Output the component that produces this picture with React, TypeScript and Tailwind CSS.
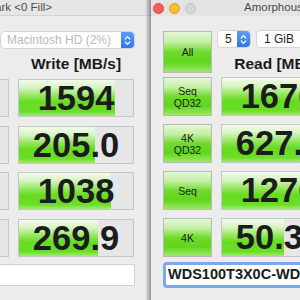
import React from "react";

const GREEN =
  "bg-[linear-gradient(to_bottom,#f3fbee_0%,#d6f4c0_22%,#8fe557_46%,#66dc1f_62%,#6bde28_88%,#a2eb72_100%)]";
const BTN_GREEN =
  "bg-[linear-gradient(to_bottom,#e4f7d6_0%,#c4efa4_25%,#6fdb2c_50%,#5fd61a_75%,#9de86a_100%)]";

function Stepper() {
  return (
    <div className="flex h-full w-[13px] shrink-0 items-center justify-center rounded-r-[4px] bg-[linear-gradient(to_bottom,#5e9cf8,#2f76ef)]">
      <svg width="7" height="11" viewBox="0 0 7 11" fill="none" stroke="white" strokeWidth="1.2" strokeLinecap="round" strokeLinejoin="round">
        <path d="M1.2 4 L3.5 1.6 L5.8 4" />
        <path d="M1.2 7 L3.5 9.4 L5.8 7" />
      </svg>
    </div>
  );
}

function Select({ label, className, muted, stepper }: { label: string; className: string; muted?: boolean; stepper?: boolean }) {
  return (
    <div className={`flex h-[16px] shrink-0 items-center rounded-[4px] bg-white shadow-[0_0_0_1px_#d4d4d4] ${className}`}>
      <div className={`flex-1 whitespace-nowrap text-[12px] leading-none ${muted ? "pl-[6px] text-[#b9b9b9]" : "pl-[7px] text-[#1f1f1f]"}`}>{label}</div>
      {stepper && <Stepper />}
    </div>
  );
}

function ValueBox({ value, pct }: { value: string; pct: number }) {
  return (
    <div className="relative h-full overflow-hidden border border-[#c6c6c6] bg-[#e6e6e6]">
      <div className={`absolute inset-y-0 left-0 ${GREEN}`} style={{ width: `${pct}%` }} />
      <div className="relative flex h-full items-center justify-center text-[34.5px] font-bold leading-none text-[#1c1c1c]">
        {value}
      </div>
    </div>
  );
}

function TestButton({ lines, active }: { lines: string[]; active: boolean }) {
  return (
    <div
      className={`flex h-full flex-col items-center justify-center border border-[#b9b9b9] text-[10.5px] leading-[12px] text-[#1a1a1a] ${
        active ? BTN_GREEN : "bg-[#e9e9e9]"
      }`}
    >
      {lines.map((l) => (
        <span key={l}>{l}</span>
      ))}
    </div>
  );
}

type Row = { lines: string[]; read: string; readPct: number; write: string; writePct: number };

const leftRows: Row[] = [
  { lines: ["Seq", "QD32"], read: "2780", readPct: 60, write: "1594", writePct: 84 },
  { lines: ["4K", "QD32"], read: "593.6", readPct: 58, write: "205.0", writePct: 67 },
  { lines: ["Seq"], read: "1272", readPct: 62, write: "1038", writePct: 81 },
  { lines: ["4K"], read: "48.19", readPct: 50, write: "269.9", writePct: 69 },
];

const rightRows: Row[] = [
  { lines: ["Seq", "QD32"], read: "1676", readPct: 88, write: "1593", writePct: 84 },
  { lines: ["4K", "QD32"], read: "627.4", readPct: 76, write: "204.8", writePct: 67 },
  { lines: ["Seq"], read: "1276", readPct: 85, write: "1041", writePct: 81 },
  { lines: ["4K"], read: "50.32", readPct: 54, write: "270.1", writePct: 69 },
];

export default function App() {
  const leftMt = ["mt-[8px]", "mt-[9px]", "mt-[8px]", "mt-[9px]"];
  const rightMt = ["mt-[7px]", "mt-[8px]", "mt-[8px]", "mt-[8px]"];
  return (
    <div className="flex h-[300px] w-[300px] overflow-hidden bg-[#ececec] font-['Liberation_Sans',Arial,sans-serif]">
      {/* Left (inactive) window */}
      <div className="-ml-[177px] h-full w-[328px] shrink-0 bg-[#ececec]">
        <div className="flex h-[16px] items-center justify-end whitespace-nowrap border-b border-[#d2d2d2] bg-[#e6e6e6] pr-[99px] text-[11.5px] text-[#4b4b4b]">
          AmorphousDiskMark &lt;0 Fill&gt;
        </div>
        <div className="pl-[12px] pr-[16px] pt-[16px]">
          <div className="grid h-[39px] grid-cols-[49px_116px_116px] gap-x-[9px]">
            <TestButton lines={["All"]} active={false} />
            <div className="col-span-2 flex flex-col">
              <div className="flex justify-end">
                <Select label="Macintosh HD (2%)" className="w-[133px]" muted stepper />
              </div>
              <div className="mt-[7px] grid grid-cols-2 gap-x-[9px] text-[15.5px] font-bold leading-[18px] text-[#1a1a1a]">
                <div className="text-center whitespace-nowrap">Read [MB/s]</div>
                <div className="text-center whitespace-nowrap">Write [MB/s]</div>
              </div>
            </div>
          </div>
          {leftRows.map((r, i) => (
            <div key={i} className={`grid h-[38px] grid-cols-[49px_116px_116px] gap-x-[9px] ${leftMt[i]}`}>
              <TestButton lines={r.lines} active={false} />
              <ValueBox value={r.read} pct={r.readPct} />
              <ValueBox value={r.write} pct={r.writePct} />
            </div>
          ))}
          <div className="mt-[7px] h-[22px] border border-[#cfcfcf] bg-white" />
        </div>
      </div>

      {/* Right (active) window */}
      <div className="relative h-full w-[500px] shrink-0 bg-[#ececec]">
        <div className="pointer-events-none absolute right-full top-0 h-full w-[6px] bg-[linear-gradient(to_left,rgba(0,0,0,0.38),rgba(0,0,0,0))]" />
        <div className="flex h-[16px] items-center whitespace-nowrap bg-[#e3e3e3] pl-[2px] text-[11.5px] text-[#4b4b4b]">
          <span className="h-[11px] w-[11px] rounded-full border border-[#e0443e] bg-[#fd5f57]" />
          <span className="ml-[5px] h-[11px] w-[11px] rounded-full border border-[#dea123] bg-[#febc2e]" />
          <span className="ml-[5px] h-[11px] w-[11px] rounded-full border border-[#c3c3c3] bg-[#d5d5d5]" />
          <span className="ml-[48px]">AmorphousDiskMark</span>
        </div>
        <div className="pl-[12px] pt-[15px]">
          <div className="grid h-[39px] grid-cols-[49px_116px_116px] gap-x-[9px]">
            <TestButton lines={["All"]} active />
            <div className="col-span-2 flex flex-col">
              <div className="-ml-[3px] flex gap-[7px]">
                <Select label="5" className="w-[32px]" stepper />
                <Select label="1 GiB" className="w-[72px]" stepper />
                <Select label="MB/s" className="w-[60px]" stepper />
              </div>
              <div className="mt-[8px] grid grid-cols-2 gap-x-[9px] text-[15.5px] font-bold leading-[18px] text-[#1a1a1a]">
                <div className="text-center whitespace-nowrap">Read [MB/s]</div>
                <div className="text-center whitespace-nowrap">Write [MB/s]</div>
              </div>
            </div>
          </div>
          {rightRows.map((r, i) => (
            <div key={i} className={`grid h-[39px] grid-cols-[49px_116px_116px] gap-x-[9px] ${rightMt[i]}`}>
              <TestButton lines={r.lines} active />
              <ValueBox value={r.read} pct={r.readPct} />
              <ValueBox value={r.write} pct={r.writePct} />
            </div>
          ))}
          <div className="mt-[5px] flex h-[26px] w-[290px] items-center rounded-[4px] border-[3px] border-[#7fa8ec] bg-white pl-[2px] text-[14.5px] font-bold text-[#1a1a1a] whitespace-nowrap">
            WDS100T3X0C-WD Black SN750
          </div>
        </div>
      </div>
    </div>
  );
}
